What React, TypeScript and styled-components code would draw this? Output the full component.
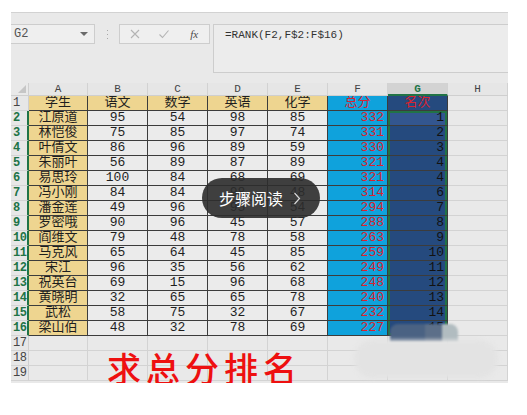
import React from 'react';
import styled, { createGlobalStyle, css } from 'styled-components';

const GlobalStyle = createGlobalStyle`
  html, body { margin: 0; padding: 0; background: #ffffff; }
  body { font-family: "Liberation Mono", "Noto Sans CJK SC", monospace; }
  #root { width: 527px; height: 415px; }
`;

const GREEN = '#217346';
const GRID_FONT = `"Liberation Mono", "Noto Sans CJK SC", monospace`;

const Screen = styled.div`
  position: relative;
  margin: 12px 0 0 11px;
  width: 497px;
  height: 371px;
  box-sizing: border-box;
  background: #e9e9e9;
  border-top: 1px solid #d2d2d2;
  padding-top: 11px;
  overflow: hidden;
`;

const FormulaBar = styled.div`
  display: flex;
  align-items: flex-start;
  height: 49px;
`;

const NameBox = styled.div`
  width: 84px;
  height: 20px;
  box-sizing: border-box;
  border: 1px solid #cdcdcd;
  border-left: none;
  background: #efefef;
  display: flex;
  align-items: center;
  justify-content: space-between;
  padding: 0 6px 0 3px;
  font: 12px ${GRID_FONT};
  color: #555;
`;

const Caret = styled.span`
  width: 0;
  height: 0;
  border-left: 4px solid transparent;
  border-right: 4px solid transparent;
  border-top: 4px solid #6a6a6a;
`;

const Grip = styled.div`
  width: 24px;
  height: 20px;
  display: flex;
  align-items: center;
  justify-content: center;
`;

const BtnBox = styled.div`
  width: 91px;
  height: 20px;
  box-sizing: border-box;
  border: 1px solid #cdcdcd;
  background: #efefef;
  display: flex;
  align-items: center;
  justify-content: space-around;
`;

const Fx = styled.span`
  font: italic 11px "Liberation Serif", serif;
  color: #4a4a4a;
  width: 12px;
  text-align: center;
`;

const FormulaBox = styled.div`
  margin-left: 3px;
  flex: 1;
  height: 49px;
  box-sizing: border-box;
  border: 1px solid #cdcdcd;
  border-right: none;
  background: #ececec;
  padding: 4px 11px;
  font: 11px ${GRID_FONT};
  color: #333;
  line-height: 13px;
`;

const Sheet = styled.div`
  margin-top: 10px;
  display: grid;
  grid-template-columns: 18px 59px repeat(7, 60px);
  grid-template-rows: 13px repeat(19, 15px);
  font-family: ${GRID_FONT};
`;

const Corner = styled.div`
  position: relative;
  border-right: 1px solid #cfcfcf;
  border-bottom: 1px solid #cfcfcf;
  box-sizing: border-box;
  display: flex;
  align-items: flex-end;
  justify-content: flex-end;
  padding: 0 2px 2px 0;
`;

const ColHead = styled.div<{ $active?: boolean }>`
  box-sizing: border-box;
  border-right: 1px solid #d2d2d2;
  border-bottom: ${(p) => (p.$active ? `2px solid ${GREEN}` : '1px solid #cfcfcf')};
  background: ${(p) => (p.$active ? '#d3d3d3' : '#e6e6e6')};
  color: ${(p) => (p.$active ? GREEN : '#444')};
  font-weight: ${(p) => (p.$active ? 700 : 400)};
  font-size: 11px;
  line-height: 12px;
  text-align: center;
`;

const RowHead = styled.div<{ $active?: boolean }>`
  box-sizing: border-box;
  border-bottom: 1px solid #d4d4d4;
  border-right: ${(p) => (p.$active ? `2px solid ${GREEN}` : '1px solid #cfcfcf')};
  background: #e7e7e7;
  color: ${(p) => (p.$active ? GREEN : '#444')};
  font-weight: ${(p) => (p.$active ? 700 : 400)};
  font-size: 12px;
  line-height: 15px;
  padding-left: 2px;
  letter-spacing: -0.5px;
`;

type Kind = 'tan' | 'plain' | 'total' | 'rank' | 'rankFirst' | 'empty';

const kindBg: Record<Kind, string> = {
  tan: '#eed590',
  plain: '#ebebeb',
  total: '#0fa2dc',
  rank: '#254a7e',
  rankFirst: '#33568f',
  empty: '#e9e9e9',
};

const Cell = styled.div<{
  $kind: Kind;
  $align?: 'center' | 'right';
  $red?: boolean;
  $sel?: 'top' | 'mid' | 'bottom';
}>`
  box-sizing: border-box;
  background: ${(p) => kindBg[p.$kind]};
  border-right: 1px solid ${(p) => (p.$kind === 'empty' ? '#d3d3d3' : '#3c3c3c')};
  border-bottom: 1px solid ${(p) => (p.$kind === 'empty' ? '#d3d3d3' : '#3c3c3c')};
  font-size: 13px;
  line-height: 14px;
  text-align: ${(p) => p.$align || 'center'};
  padding: 0 3px;
  white-space: nowrap;
  overflow: hidden;
  color: ${(p) => (p.$red ? '#d8232f' : p.$kind === 'rank' || p.$kind === 'rankFirst' ? '#121212' : '#1e1e1e')};
  ${(p) =>
    p.$sel &&
    css`
      box-shadow: inset 2px 0 0 ${GREEN}, inset -2px 0 0 ${GREEN}
        ${p.$sel === 'top' ? `, inset 0 2px 0 ${GREEN}` : ''}
        ${p.$sel === 'bottom' ? `, inset 0 -2px 0 ${GREEN}` : ''};
    `}
`;

const Pill = styled.div`
  position: absolute;
  left: 191px;
  top: 165px;
  width: 118px;
  height: 40px;
  border-radius: 20px;
  background: rgba(44, 44, 44, 0.9);
  display: flex;
  align-items: center;
  justify-content: center;
  gap: 10px;
  padding-right: 2px;
  box-sizing: border-box;
  font: 16px "Noto Sans CJK SC", sans-serif;
  color: #ffffff;
`;

const BigTitle = styled.div`
  position: absolute;
  left: 96px;
  top: 335px;
  font: 500 34px "Noto Sans CJK SC", sans-serif;
  letter-spacing: 5px;
  color: #ee1010;
  line-height: 40px;
  white-space: nowrap;
`;

const Smudge = styled.div`
  position: absolute;
  left: 343px;
  top: 327px;
  width: 144px;
  height: 38px;
  border-radius: 19px;
  background: #e3e3e3;
  filter: blur(2px);
`;

const SmudgeDark = styled.div`
  position: absolute;
  left: 379px;
  top: 311px;
  width: 68px;
  height: 18px;
  border-radius: 8px 8px 0 0;
  background: linear-gradient(90deg, #4a6283 0 52%, #5c6f89 52% 76%, #b1bcc0 76%);
  filter: blur(1px);
`;

const names = ['江原道', '林恺俊', '叶倩文', '朱丽叶', '易思玲', '冯小刚', '潘金莲', '罗密哦', '阎维文', '马克风', '宋江', '祝英台', '黄晓明', '武松', '梁山伯'];
const scores: number[][] = [
  [95, 54, 98, 85],
  [75, 85, 97, 74],
  [86, 96, 89, 59],
  [56, 89, 87, 89],
  [100, 84, 68, 69],
  [84, 84, 98, 48],
  [49, 96, 95, 54],
  [90, 96, 45, 57],
  [79, 48, 78, 58],
  [65, 64, 45, 85],
  [96, 35, 56, 62],
  [69, 15, 96, 68],
  [32, 65, 65, 78],
  [58, 75, 32, 67],
  [48, 32, 78, 69],
];
const totals = [332, 331, 330, 321, 321, 314, 294, 288, 263, 259, 249, 248, 240, 232, 227];
const ranks = [1, 2, 3, 4, 4, 6, 7, 8, 9, 10, 11, 12, 13, 14, 15];
const headers = ['学生', '语文', '数学', '英语', '化学'];
const letters = ['A', 'B', 'C', 'D', 'E', 'F', 'G', 'H'];

export default function App() {
  const rows: React.ReactNode[] = [];

  // header row 1
  rows.push(<RowHead key="r1">1</RowHead>);
  headers.forEach((h) =>
    rows.push(
      <Cell key={`h-${h}`} $kind="tan">
        {h}
      </Cell>
    )
  );
  rows.push(
    <Cell key="h-total" $kind="total" $red>
      总分
    </Cell>
  );
  rows.push(
    <Cell key="h-rank" $kind="rank" $red>
      名次
    </Cell>
  );
  rows.push(<Cell key="h-H" $kind="empty" />);

  names.forEach((n, i) => {
    const sel = i === 0 ? 'top' : i === names.length - 1 ? 'bottom' : 'mid';
    rows.push(
      <RowHead key={`rh${i}`} $active>
        {i + 2}
      </RowHead>
    );
    rows.push(
      <Cell key={`n${i}`} $kind="tan">
        {n}
      </Cell>
    );
    scores[i].forEach((s, j) =>
      rows.push(
        <Cell key={`s${i}-${j}`} $kind="plain">
          {s}
        </Cell>
      )
    );
    rows.push(
      <Cell key={`t${i}`} $kind="total" $align="right" $red>
        {totals[i]}
      </Cell>
    );
    rows.push(
      <Cell key={`k${i}`} $kind={i === 0 ? 'rankFirst' : 'rank'} $align="right" $sel={sel}>
        {ranks[i]}
      </Cell>
    );
    rows.push(<Cell key={`e${i}`} $kind="empty" />);
  });

  [17, 18, 19].forEach((r) => {
    rows.push(<RowHead key={`rh${r}`}>{r}</RowHead>);
    letters.forEach((l) => rows.push(<Cell key={`x${r}${l}`} $kind="empty" />));
  });

  return (
    <>
      <GlobalStyle />
      <Screen>
        <FormulaBar>
          <NameBox>
            G2
            <Caret />
          </NameBox>
          <Grip>
            <svg width="3" height="11" viewBox="0 0 3 11">
              <rect x="1" y="1" width="1" height="1" fill="#a8a8a8" />
              <rect x="1" y="5" width="1" height="1" fill="#a8a8a8" />
              <rect x="1" y="9" width="1" height="1" fill="#a8a8a8" />
            </svg>
          </Grip>
          <BtnBox>
            <svg width="12" height="12" viewBox="0 0 12 12">
              <path d="M2 2 L10 10 M10 2 L2 10" stroke="#b4b4b4" strokeWidth="1.1" fill="none" />
            </svg>
            <svg width="12" height="12" viewBox="0 0 12 12">
              <path d="M1.5 6.5 L4.5 9.5 L10.5 2.5" stroke="#b4b4b4" strokeWidth="1.1" fill="none" />
            </svg>
            <Fx>fx</Fx>
          </BtnBox>
          <FormulaBox>=RANK(F2,F$2:F$16)</FormulaBox>
        </FormulaBar>
        <Sheet>
          <Corner>
            <svg width="8" height="8" viewBox="0 0 8 8">
              <path d="M8 0 L8 8 L0 8 Z" fill="#c6c6c6" />
            </svg>
          </Corner>
          {letters.map((l) => (
            <ColHead key={l} $active={l === 'G'}>
              {l}
            </ColHead>
          ))}
          {rows}
        </Sheet>
        <Pill>
          <span>步骤阅读</span>
          <svg width="8" height="13" viewBox="0 0 8 13">
            <path d="M1.5 1 L6.5 6.5 L1.5 12" stroke="#d8d8d8" strokeWidth="1.2" fill="none" />
          </svg>
        </Pill>
        <SmudgeDark />
        <Smudge />
        <BigTitle>求总分排名</BigTitle>
      </Screen>
    </>
  );
}
